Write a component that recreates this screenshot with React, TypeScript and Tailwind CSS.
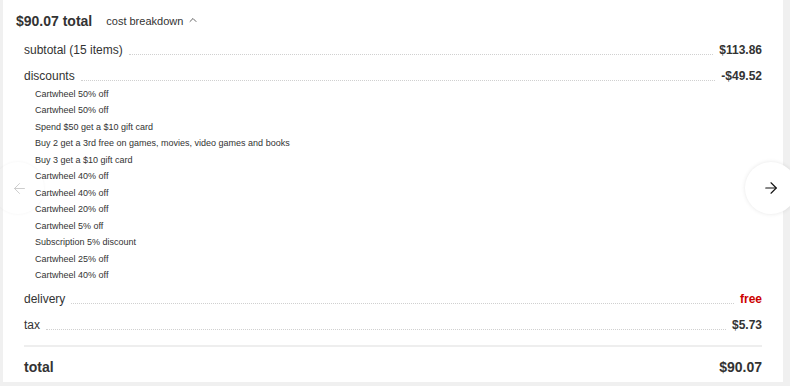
import React from "react";
import { ArrowLeft, ArrowRight, ChevronUp } from "lucide-react";

const discounts = [
  "Cartwheel 50% off",
  "Cartwheel 50% off",
  "Spend $50 get a $10 gift card",
  "Buy 2 get a 3rd free on games, movies, video games and books",
  "Buy 3 get a $10 gift card",
  "Cartwheel 40% off",
  "Cartwheel 40% off",
  "Cartwheel 20% off",
  "Cartwheel 5% off",
  "Subscription 5% discount",
  "Cartwheel 25% off",
  "Cartwheel 40% off",
];

function Line({
  label,
  value,
  valueClass = "text-[#333]",
  rowClass = "h-[26px]",
}: {
  label: string;
  value: string;
  valueClass?: string;
  rowClass?: string;
}) {
  return (
    <div className={`flex items-center ${rowClass}`}>
      <span className="text-[12px] leading-[20px] text-[#333]">{label}</span>
      <div className="flex-1 mx-[6px] mt-[8px] border-t border-dotted border-[#d0d0d0]" />
      <span className={`text-[12px] leading-[20px] font-bold ${valueClass}`}>{value}</span>
    </div>
  );
}

export default function App() {
  return (
    <div
      className="relative w-[790px] h-[386px] overflow-hidden bg-[#f0f0f0]"
      style={{ fontFamily: '"Liberation Sans", Arial, sans-serif' }}
    >
      <div className="ml-[3px] w-[780px] h-[382px] bg-white">
        {/* header */}
        <div className="h-[37px] pt-[12px] pl-[13px] flex items-start">
          <span className="text-[14px] leading-[18px] font-bold text-[#333]">$90.07 total</span>
          <span className="ml-[14px] text-[11px] leading-[18px] text-[#333]">cost breakdown</span>
          <ChevronUp size={12} strokeWidth={1.5} className="ml-[4px] mt-[2px] text-[#333]" />
        </div>

        <div className="px-[21px]">
          <Line label="subtotal (15 items)" value="$113.86" />
          <Line label="discounts" value="-$49.52" rowClass="h-[23px] pt-[3px]" />
          <ul className="pl-[11px]">
            {discounts.map((d, i) => (
              <li key={i} className="h-[16.5px] flex items-center text-[9px] text-[#333]">
                {d}
              </li>
            ))}
          </ul>
          <Line label="delivery" value="free" valueClass="text-[#cc0000]" rowClass="h-[26px] pt-[4px]" />
          <Line label="tax" value="$5.73" rowClass="h-[30px]" />
          <div className="mt-[5px] h-[2px] bg-[#eeeeee]" />
          <div className="h-[35px] pt-[10px] flex items-start justify-between">
            <span className="text-[14px] leading-[20px] font-bold text-[#333]">total</span>
            <span className="text-[14px] leading-[20px] font-bold text-[#333]">$90.07</span>
          </div>
        </div>
      </div>

      {/* carousel arrows */}
      <button className="absolute left-[-8px] top-[162px] w-[52px] h-[52px] rounded-full bg-transparent shadow-[0_0_3px_rgba(0,0,0,0.05)] flex items-center justify-center">
        <ArrowLeft size={17} strokeWidth={1.3} className="ml-[2px] text-[#c8c8c8]" />
      </button>
      <button className="absolute left-[745px] top-[162px] w-[52px] h-[52px] rounded-full bg-white shadow-[0_0_4px_rgba(0,0,0,0.1)] flex items-center justify-center">
        <ArrowRight size={18} strokeWidth={1.5} className="text-[#111]" />
      </button>
    </div>
  );
}
